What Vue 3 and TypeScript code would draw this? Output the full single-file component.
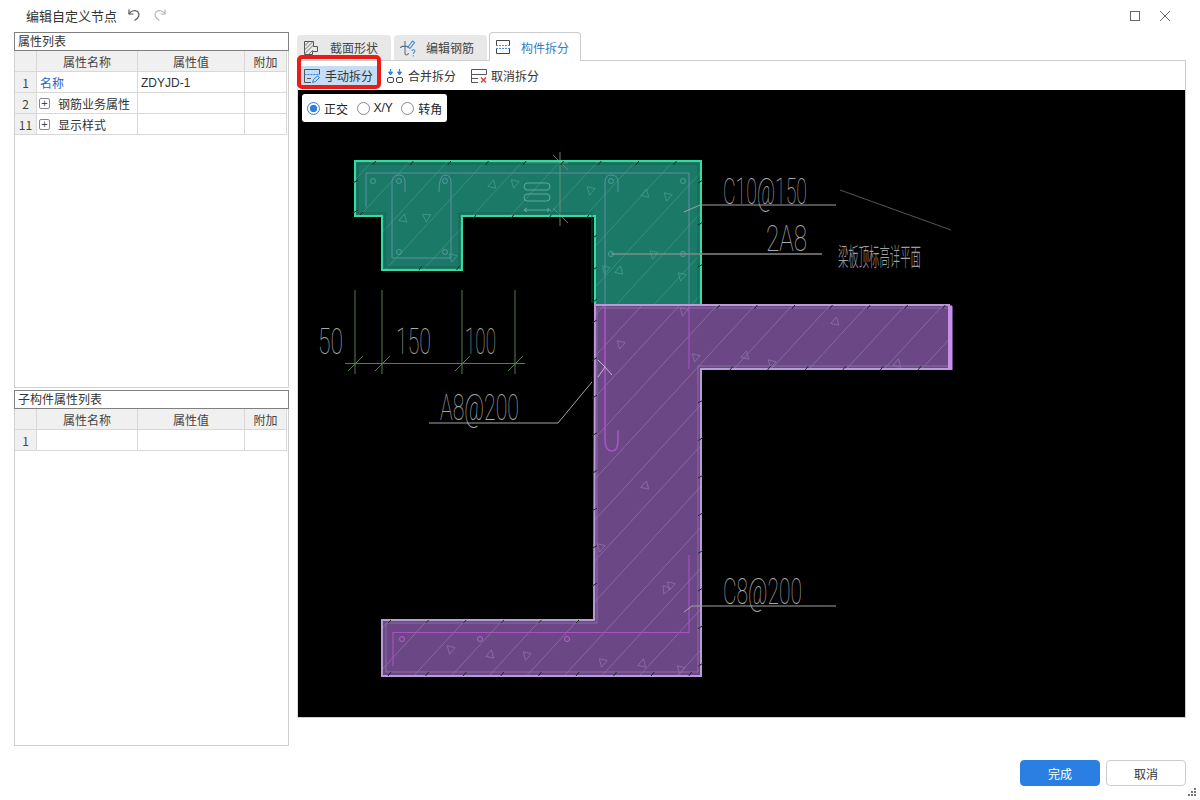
<script setup lang="ts">
type Seg = { x1: number; y1: number; x2: number; y2: number }
const slope = 0.92
function hatch(start: number, end: number, step: number): Seg[] {
  const out: Seg[] = []
  for (let c = start; c < end; c += step) {
    out.push({ x1: c, y1: 0, x2: c - slope * 800, y2: 800 })
  }
  return out
}
const greenHatch = hatch(520.8 - 37.6 * 3, 1200, 37.6)
const purpleHatch = hatch(998 - 37.6 * 12, 1600, 37.6)

function range(a: number, b: number, s: number): number[] {
  const r: number[] = []
  for (let v = a; v <= b; v += s) r.push(v)
  return r
}
const ticks: Seg[] = [
  ...range(372.7, 690, 37.6).map(x => ({ x1: x, y1: 165, x2: x + 3, y2: 161 })),
  ...range(360, 380, 37.6).map(x => ({ x1: x, y1: 215, x2: x + 3, y2: 212 })),
  ...range(473, 590, 37.6).map(x => ({ x1: x, y1: 219, x2: x + 3, y2: 215 })),
  ...range(419, 460, 37.6).map(x => ({ x1: x, y1: 270, x2: x + 3, y2: 266 })),
  ...range(716.7, 945, 37.6).map(x => ({ x1: x, y1: 309, x2: x + 3, y2: 305 })),
  ...range(730, 945, 37.6).map(x => ({ x1: x, y1: 370, x2: x + 3, y2: 366 })),
  ...range(388, 590, 37.6).map(x => ({ x1: x, y1: 623, x2: x + 3, y2: 620 })),
  ...range(388, 695, 37.6).map(x => ({ x1: x, y1: 676, x2: x + 3, y2: 672 })),
  ...range(320, 600, 37.6).map(y => ({ x1: 592, y1: y + 3, x2: 597, y2: y })),
  ...range(400, 670, 37.6).map(y => ({ x1: 698, y1: y + 3, x2: 703, y2: y })),
  ...range(180, 300, 42).map(y => ({ x1: 698, y1: y + 3, x2: 703, y2: y })),
  ...range(180, 210, 30).map(y => ({ x1: 353, y1: y + 3, x2: 358, y2: y })),
  ...range(235, 300, 32).map(y => ({ x1: 593, y1: y + 3, x2: 597, y2: y }))
]

function tri(x: number, y: number, r = 0): string {
  const a = (r * Math.PI) / 180
  const pts = [[-4, -3], [4, -4], [1, 4]]
  return pts
    .map(([px, py]) => `${x + px * Math.cos(a) - py * Math.sin(a)},${y + px * Math.sin(a) + py * Math.cos(a)}`)
    .join(' ')
}
const greenTri = [
  [493, 184, 200], [514, 184, 20], [590, 191, 20], [646, 193, 200], [667, 197, 20],
  [404, 218, 200], [426, 218, 10], [452, 258, 20], [605, 270, 20], [620, 270, 200],
  [653, 255, 20], [681, 277, 20]
].map(([x, y, r]) => tri(x, y, r))
const purpleTri = [
  [683, 312, 20], [836, 321, 200], [695, 358, 20], [746, 355, 200], [771, 364, 20],
  [898, 363, 200], [620, 345, 20], [646, 485, 200], [600, 548, 20], [665, 590, 30],
  [670, 586, 20], [450, 650, 20], [491, 654, 200], [526, 656, 20], [602, 663, 20],
  [643, 663, 200], [680, 670, 20]
].map(([x, y, r]) => tri(x, y, r))
const greenCircles = [[373, 181], [399, 181], [445, 181], [399, 252], [445, 252], [611, 181], [683, 181], [611, 254], [683, 254]]
const purpleCircles = [[402, 639], [480, 639], [567, 639]]
const dimX = [355, 382, 462, 515]

const rows1 = [
  { n: '1', name: '名称', value: 'ZDYJD-1', link: true, plus: false },
  { n: '2', name: '钢筋业务属性', value: '', link: false, plus: true },
  { n: '11', name: '显示样式', value: '', link: false, plus: true }
]
const rows2 = [{ n: '1', name: '', value: '', link: false, plus: false }]
const panels = [
  { title: '属性列表', rows: rows1 },
  { title: '子构件属性列表', rows: rows2 }
]
const dots = [[6, 0], [3, 3], [6, 3], [0, 6], [3, 6], [6, 6]]
</script>

<template>
  <div class="app">
    <header class="titlebar">
      <span class="title">编辑自定义节点</span>
      <svg class="undo" width="14" height="14" viewBox="0 0 14 14" fill="none" stroke="#555" stroke-width="1.2">
        <path d="M2 1.5V6H6.5" />
        <path d="M2 6C4 2.5 8.5 1.5 11 4C13 6.5 12 10 7.5 12.5" />
      </svg>
      <svg class="redo" width="14" height="14" viewBox="0 0 14 14" fill="none" stroke="#b5b5b5" stroke-width="1.2">
        <path d="M12 1.5V6H7.5" />
        <path d="M12 6C10 2.5 5.5 1.5 3 4C1 6.5 2 10 6.5 12.5" />
      </svg>
      <span class="spacer"></span>
      <svg class="winmax" width="11" height="11" viewBox="0 0 11 11" fill="none" stroke="#666"><rect x="0.5" y="0.5" width="9" height="9" /></svg>
      <svg class="winclose" width="12" height="12" viewBox="0 0 12 12" fill="none" stroke="#666"><path d="M1 1L11 11M11 1L1 11" /></svg>
    </header>

    <main class="main">
      <aside class="left">
        <section v-for="p in panels" :key="p.title" class="panel">
          <div class="panel-title">{{ p.title }}</div>
          <div class="grid">
            <div class="cell head"></div>
            <div class="cell head center">属性名称</div>
            <div class="cell head center">属性值</div>
            <div class="cell head center">附加</div>
            <template v-for="r in p.rows" :key="r.n">
              <div class="cell head center">{{ r.n }}</div>
              <div class="cell name" :class="{ link: r.link }">
                <span v-if="r.plus" class="plus">+</span>{{ r.name }}
              </div>
              <div class="cell value">{{ r.value }}</div>
              <div class="cell"></div>
            </template>
          </div>
        </section>
      </aside>

      <section class="right">
        <nav class="tabs">
          <div class="tab">
            <svg width="16" height="16" viewBox="0 0 16 16" fill="none" stroke="#555" stroke-width="1">
              <path d="M1.5 1.5H10.5V6.5H14.5V11.5H9.5V14.5H1.5Z" />
              <path d="M1.5 6L6 1.5M1.5 10L10 1.5M1.5 14L10.5 5M5.5 14.5L10 10" stroke="#777" />
            </svg>
            <span>截面形状</span>
          </div>
          <div class="tab">
            <svg width="18" height="18" viewBox="0 0 18 18" fill="none" stroke="#5a6f86" stroke-width="1.1">
              <path d="M6 2V7M1.5 9C2 6.5 9 6.5 9.5 9M6 7V14.5C6 16.5 9 16.5 9.5 14" />
              <path d="M9 8L13.5 2L15.5 3.5L11 9.5Z" stroke="#3f8ed6" />
              <path d="M13 12C13 10.3 16.3 10.3 15.8 12.5C15.3 13.7 14.3 13.7 14.3 15M14.3 16.3V17.5" stroke="#3f8ed6" />
            </svg>
            <span>编辑钢筋</span>
          </div>
          <div class="tab active">
            <svg width="16" height="16" viewBox="0 0 16 16" fill="none" stroke="#444" stroke-width="1">
              <path d="M1.5 6.5V1.5H14.5V6.5" />
              <path d="M1.5 9.5V14.5H14.5V9.5" />
              <path d="M1 6.5H15M1 9.5H15" stroke="#4a8fd6" stroke-dasharray="2 1" />
            </svg>
            <span>构件拆分</span>
          </div>
        </nav>

        <div class="stage">
          <div class="toolbar">
            <div class="tool on">
              <svg width="16" height="16" viewBox="0 0 16 16" fill="none" stroke="#555" stroke-width="1">
                <path d="M0.5 6.5V1.5H15.5V6.5" />
                <path d="M0.5 6.5H15.5" stroke="#2f7fd8" stroke-dasharray="2 1" />
                <path d="M0.5 6.5V14.5H7M3 10.5H7" />
                <path d="M8.5 14.5L9.5 11.5L13.5 8L15.5 9.5L11.5 13.5Z" stroke="#2f7fd8" />
              </svg>
              <span>手动拆分</span>
            </div>
            <div class="tool second">
              <svg width="16" height="16" viewBox="0 0 16 16" fill="none" stroke="#444" stroke-width="1">
                <rect x="0.5" y="9.5" width="6" height="5" rx="1.5" />
                <rect x="9.5" y="9.5" width="6" height="5" rx="1.5" />
                <path d="M3.5 1V3.5M12.5 1V3.5" stroke="#2f7fd8" stroke-width="1.2" />
                <path d="M1.5 4L3.5 7L5.5 4ZM10.5 4L12.5 7L14.5 4Z" stroke="#2f7fd8" fill="#2f7fd8" />
              </svg>
              <span>合并拆分</span>
            </div>
            <div class="tool third">
              <svg width="16" height="16" viewBox="0 0 16 16" fill="none" stroke="#555" stroke-width="1">
                <path d="M0.5 6.5V1.5H15.5V6.5H0.5V14.5H7M0.5 10.5H7" />
                <path d="M10 9.5L15 14.5M15 9.5L10 14.5" stroke="#e0352b" stroke-width="1.3" />
              </svg>
              <span>取消拆分</span>
            </div>
          </div>

          <div class="canvas">
            <svg class="drawing" width="887" height="627" viewBox="298 90 887 627" fill="none">
              <defs>
                <clipPath id="clip-green"><path d="M355 161H701V305H595V216H462V270H382V216H355Z" /></clipPath>
                <clipPath id="clip-purple"><path d="M595 305H952V369H701V676H382V620H594Z" /></clipPath>
              </defs>

              <path d="M355 161H701V305H595V216H462V270H382V216H355Z" fill="#1b7a67" />
              <path d="M595 305H952V369H701V676H382V620H594Z" fill="#6c4786" />

              <g clip-path="url(#clip-green)" stroke="#469484" stroke-width="0.7">
                <line v-for="(l, i) in greenHatch" :key="i" :x1="l.x1" :y1="l.y1" :x2="l.x2" :y2="l.y2" />
              </g>
              <g clip-path="url(#clip-purple)" stroke="#9276ad" stroke-width="0.7">
                <line v-for="(l, i) in purpleHatch" :key="i" :x1="l.x1" :y1="l.y1" :x2="l.x2" :y2="l.y2" />
              </g>

              <g stroke="#5f8fa6" stroke-width="1">
                <path d="M366 207V173H689V305" />
                <path d="M392 258V182Q392 175 399 175Q405 175 405 182V192" />
                <path d="M392 258H451V182Q451 175 445 175Q439 175 439 192" />
                <path d="M605 305V182Q605 175 611 175Q618 175 618 182V192" />
              </g>
              <g stroke="#5f9fac" stroke-width="0.8">
                <circle v-for="(c, i) in greenCircles" :key="i" :cx="c[0]" :cy="c[1]" r="2.5" />
              </g>
              <polygon v-for="(t, i) in greenTri" :key="'g' + i" :points="t" stroke="#4ba08f" stroke-width="0.7" />
              <line x1="611" y1="254" x2="683" y2="254" stroke="#68bba8" stroke-width="1.2" />

              <g stroke="#6fb8a6" stroke-width="0.8">
                <rect x="524" y="183" width="26" height="7" rx="3.5" />
                <rect x="524" y="194" width="26" height="7" rx="3.5" />
                <path d="M524 210H551M527 208L524 210L527 212M548 208V212" />
              </g>
              <g stroke="#6f8f78" stroke-width="0.9">
                <path d="M560 152V226" />
                <path d="M553 155L568 170M553 208L568 223" />
                <path d="M525 163H568" stroke="#5fae9e" />
              </g>

              <g stroke="#a952c4" stroke-width="1.1">
                <path d="M689 305V369" />
                <path d="M605 305V440Q605 451 612 451Q618 451 618 440V430" stroke-width="1.6" />
                <path d="M393 666V632.5H689V555" />
              </g>
              <g stroke="#b45fd0" stroke-width="1">
                <circle v-for="(c, i) in purpleCircles" :key="i" :cx="c[0]" :cy="c[1]" r="2.5" />
              </g>
              <polygon v-for="(t, i) in purpleTri" :key="'p' + i" :points="t" stroke="#9378ad" stroke-width="0.7" />

              <path d="M355 161H701V305H595V216H462V270H382V216H355Z" stroke="#35dca0" stroke-width="2" />
              <path d="M358 164H698V303M592 303V213H459V267H385V213H358V164" stroke="#1a5e50" stroke-width="0.8" />
              <path d="M595 305H949V369H701V676H382V620H594Z" stroke="#b89bd8" stroke-width="2" />
              <path d="M597 308H949M949 366H698V672H386V623H597V308" stroke="#8f7aa8" stroke-width="0.8" />
              <path d="M950.5 306V370" stroke="#cb8cf0" stroke-width="4" />
              <g stroke="#1c2a2a" stroke-width="1">
                <line v-for="(t, i) in ticks" :key="i" :x1="t.x1" :y1="t.y1" :x2="t.x2" :y2="t.y2" />
              </g>

              <g stroke="#5e8a55" stroke-width="0.9">
                <line v-for="x in dimX" :key="x" :x1="x" y1="290" :x2="x" y2="374" />
                <path d="M345 363.5H525" />
                <line v-for="x in dimX" :key="'t' + x" :x1="x - 7" y1="371" :x2="x + 8" y2="356" />
              </g>

              <g stroke="#a3a3a3" stroke-width="1">
                <path d="M429 423H558L592 382" />
                <path d="M598 360L605 367L598 377M605 367L612 375" stroke="#c9b3dc" />
                <path d="M684 212L700 205H836" />
                <path d="M611 254H822" stroke="#7f7f7f" stroke-width="1.2" />
                <path d="M683 254H822" stroke="#8c8c8c" stroke-width="1.2" />
                <path d="M684 612L692 606H836" />
              </g>
              <path d="M840 190L951 230" stroke="#565656" stroke-width="1" />

              <g class="cad">
                <text x="318" y="354" font-size="37" textLength="25" lengthAdjust="spacingAndGlyphs">50</text>
                <text x="396" y="354" font-size="37" textLength="35" lengthAdjust="spacingAndGlyphs">150</text>
                <text x="465" y="354" font-size="37" textLength="31" lengthAdjust="spacingAndGlyphs">100</text>
                <text x="440" y="420" font-size="37" textLength="79" lengthAdjust="spacingAndGlyphs">A8@200</text>
                <text x="723" y="204" font-size="37" textLength="84" lengthAdjust="spacingAndGlyphs">C10@150</text>
                <text x="766" y="251" font-size="37" textLength="41" lengthAdjust="spacingAndGlyphs">2A8</text>
                <text x="723" y="604" font-size="37" textLength="79" lengthAdjust="spacingAndGlyphs">C8@200</text>
              </g>
              <text class="cad-cn" x="838" y="266" font-size="25" textLength="83" lengthAdjust="spacingAndGlyphs">梁板顶标高详平面</text>
            </svg>

            <div class="radios">
              <label class="radio"><i class="dot checked"></i>正交</label>
              <label class="radio latin"><i class="dot"></i>X/Y</label>
              <label class="radio"><i class="dot"></i>转角</label>
            </div>
          </div>

          <div class="marker"></div>
        </div>
      </section>
    </main>

    <footer class="footer">
      <button class="btn primary">完成</button>
      <button class="btn">取消</button>
      <svg class="grip" width="9" height="9" viewBox="0 0 9 9">
        <rect v-for="(d, i) in dots" :key="i" :x="d[0]" :y="d[1]" width="2" height="2" fill="#777" />
      </svg>
    </footer>
  </div>
</template>

<style scoped>
.app {
  position: relative;
  width: 1200px;
  height: 800px;
  background: #fff;
  overflow: hidden;
  font-family: "Noto Sans CJK SC", "Noto Sans", sans-serif;
  font-size: 12px;
  color: #333;
  display: flex;
  flex-direction: column;
}
.titlebar {
  height: 32px;
  flex: none;
  display: flex;
  align-items: center;
  padding-left: 26px;
  box-sizing: border-box;
}
.title { font-size: 13px; color: #333; margin-top: -2px; }
.undo { margin-left: 10px; margin-top: -2px; }
.redo { margin-left: 12px; margin-top: -2px; }
.spacer { flex: 1; }
.winmax { margin-right: 18px; }
.winclose { margin-right: 29px; }

.main {
  flex: none;
  height: 714px;
  display: flex;
  padding-left: 14px;
}
.left {
  width: 275px;
  display: flex;
  flex-direction: column;
  gap: 2px;
  flex: none;
}
.panel {
  height: 356px;
  box-sizing: border-box;
  border: 1px solid #cfcfcf;
  border-top: none;
  display: flex;
  flex-direction: column;
}
.panel-title {
  height: 19px;
  margin: 0 -1px;
  box-sizing: border-box;
  border: 1px solid #808080;
  padding-left: 3px;
  line-height: 15px;
  background: #fff;
}
.grid {
  display: grid;
  grid-template-columns: 22px 101px 107px 42px;
  grid-auto-rows: 21px;
  width: 272px;
}
.cell {
  box-sizing: border-box;
  border-right: 1px solid #d8d8d8;
  border-bottom: 1px solid #d8d8d8;
  line-height: 20px;
  padding: 1px 3px 0;
  white-space: nowrap;
  overflow: hidden;
}
.head { background: #f0f0f0; color: #444; }
.center { text-align: center; padding: 1px 0 0; }
.link { color: #2a5fc4; }
.value { color: #333; font-family: "Liberation Sans", "Noto Sans CJK SC", sans-serif; }
.name { display: flex; align-items: center; }
.plus {
  width: 11px;
  height: 11px;
  box-sizing: border-box;
  border: 1px solid #888;
  border-radius: 2px;
  margin: 0 8px 0 -1px;
  font: 11px/8px "Liberation Sans", sans-serif;
  text-align: center;
  color: #444;
  flex: none;
}

.right {
  width: 889px;
  margin-left: 8px;
  display: flex;
  flex-direction: column;
  flex: none;
}
.tabs {
  height: 28px;
  display: flex;
  align-items: flex-end;
  flex: none;
}
.tab {
  width: 94px;
  height: 25px;
  margin-right: 3px;
  box-sizing: border-box;
  background: #e8e8e8;
  border-radius: 4px 4px 0 0;
  display: flex;
  align-items: center;
  padding-left: 6px;
  gap: 11px;
  color: #444;
}
.tab:nth-child(2) { width: 93px; margin-right: 2px; gap: 9px; padding-left: 5px; }
.tab.active {
  width: 92px;
  height: 29px;
  background: #fff;
  border: 1px solid #ccc;
  border-bottom: none;
  color: #2f7dc6;
  gap: 10px;
  padding-left: 5px;
  margin-bottom: -1px;
  position: relative;
  z-index: 1;
}
.stage {
  position: relative;
  height: 658px;
  box-sizing: border-box;
  border: 1px solid #ccc;
  border-left-color: #ddd;
  display: flex;
  flex-direction: column;
}
.toolbar {
  height: 29px;
  flex: none;
  display: flex;
  align-items: center;
  padding-left: 3px;
}
.tool {
  display: flex;
  align-items: center;
  height: 20px;
  gap: 5px;
  padding: 0 4px 0 3px;
}
.tool.on { background: #c4ddf4; width: 76px; box-sizing: border-box; }
.second { margin-left: 7px; }
.third { margin-left: 8px; gap: 4px; }
.canvas {
  position: relative;
  flex: 1;
  background: #000;
  overflow: hidden;
}
.drawing { display: block; }
.cad text {
  font-family: Roboto, "Liberation Sans", sans-serif;
  font-weight: 100;
  fill: #a8a8a8;
}
.cad-cn {
  font-family: "Noto Sans CJK SC", sans-serif;
  font-weight: 300;
  fill: #a0a0a0;
}
.radios {
  position: absolute;
  left: 4px;
  top: 4px;
  width: 145px;
  height: 28px;
  background: #fff;
  border-radius: 3px;
  display: flex;
  align-items: center;
  box-sizing: border-box;
  padding-left: 5px;
  gap: 8.5px;
  color: #222;
}
.radio { display: flex; align-items: center; gap: 4px; font-family: "Noto Sans CJK SC", sans-serif; }
.radio.latin { font-family: "Liberation Sans", sans-serif; }
.dot {
  width: 13px;
  height: 13px;
  box-sizing: border-box;
  border: 1px solid #888;
  border-radius: 50%;
  display: block;
}
.dot.checked {
  border-color: #2f7fd8;
  background: radial-gradient(circle, #2f7fd8 0 3.4px, #fff 4px);
}
.marker {
  position: absolute;
  left: -1px;
  top: -6px;
  width: 84px;
  height: 34px;
  box-sizing: border-box;
  border: 4px solid #ec1c14;
  border-radius: 5px;
  z-index: 2;
}

.footer {
  flex: 1;
  position: relative;
  display: flex;
  justify-content: flex-end;
  gap: 6px;
  padding: 14px 14px 0 0;
}
.btn {
  width: 80px;
  height: 26px;
  box-sizing: border-box;
  border: 1px solid #ccc;
  border-radius: 4px;
  background: #fff;
  color: #333;
  font: 12px "Noto Sans CJK SC", sans-serif;
  padding: 0;
}
.primary { background: #2b7fe3; border-color: #2b7fe3; color: #fff; }
.grip { position: absolute; right: 3px; bottom: 3px; }
</style>
